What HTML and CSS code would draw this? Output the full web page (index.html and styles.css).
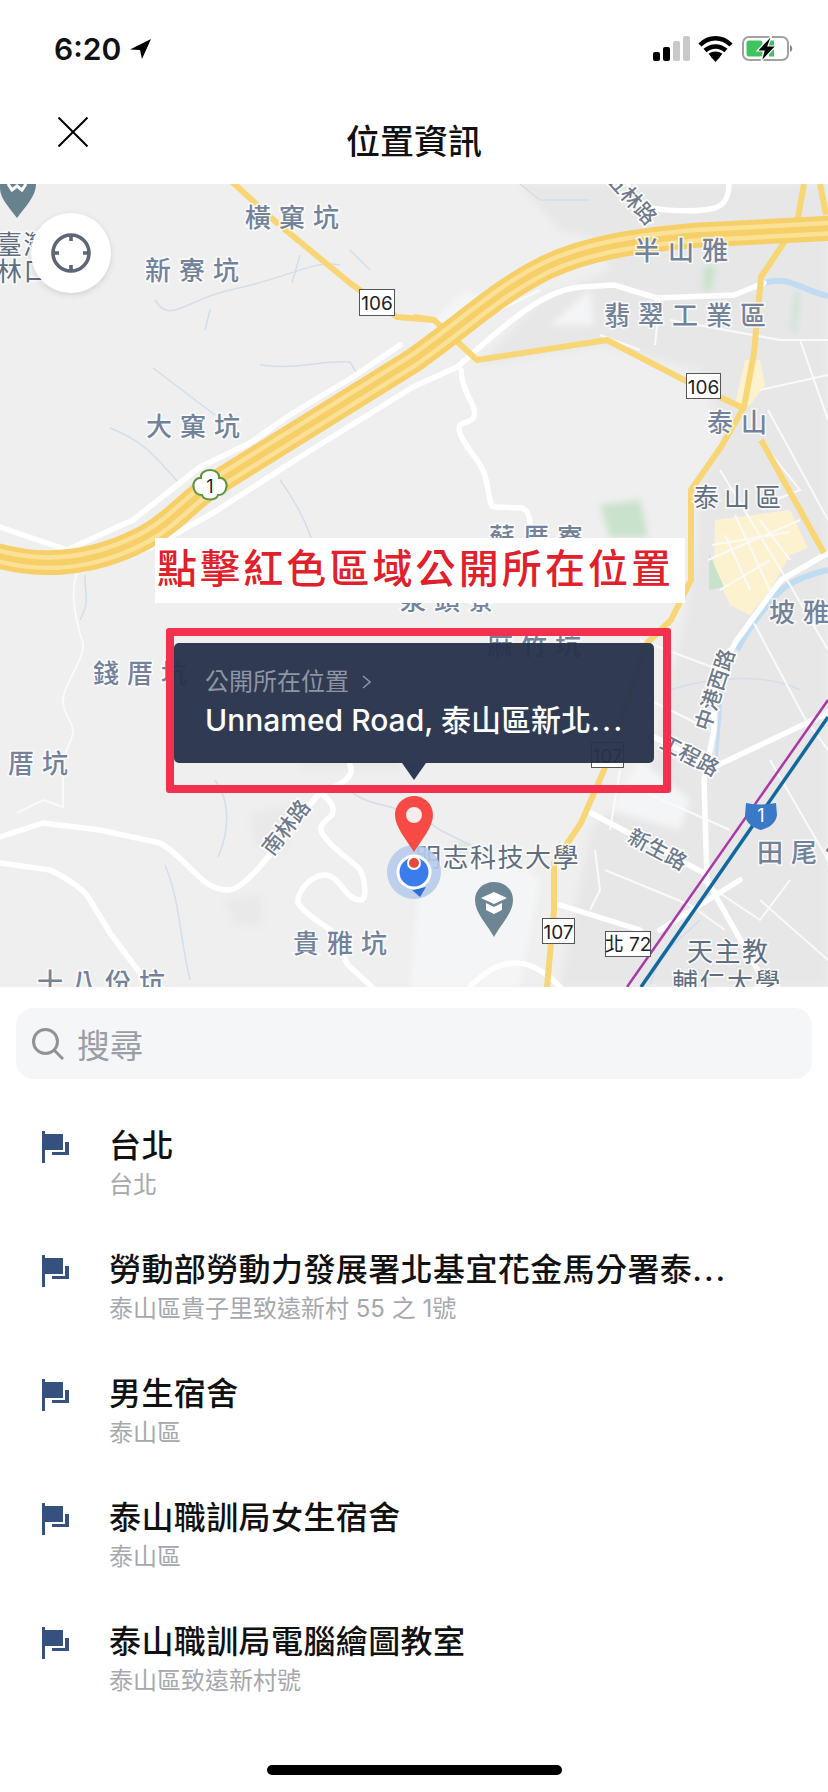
FILE: index.html
```html
<!DOCTYPE html>
<html lang="zh-Hant">
<head>
    <meta charset="UTF-8">
    <meta name="viewport" content="width=device-width, initial-scale=1.0">
    <title>位置資訊</title>
    <link rel="stylesheet" href="styles.css">
</head>
<body>
<div class="status-bar">
    <div class="status-left">
        <span class="clock">6:20</span>
        <svg class="loc-arrow" viewBox="0 0 22 20"><path d="M21 0 L0 10.5 L10 11 L12 20 Z"/></svg>
    </div>
    <svg class="status-right" viewBox="0 0 144 28">
        <rect x="0" y="17" width="7" height="9" rx="2" fill="#000"/>
        <rect x="10" y="12" width="7" height="14" rx="2" fill="#000"/>
        <rect x="20" y="6" width="7" height="20" rx="2" fill="#c9c9c9"/>
        <rect x="30" y="1" width="7" height="25" rx="2" fill="#c9c9c9"/>
        <path d="M47 10 C56 1 69 1 78 10 M52 15.5 C58 10 67 10 73 15.5 M57 20.5 C60 18 65 18 68 20.5" fill="none" stroke="#000" stroke-width="4.5"/>
        <path d="M62.5 27 L58 22 C61 20 64 20 67 22 Z" fill="#000"/>
        <rect x="90" y="2" width="45" height="23" rx="6" fill="none" stroke="#a2a2a2" stroke-width="2"/>
        <rect x="93.5" y="5.5" width="16" height="16" rx="2.5" fill="#3ec35e"/>
        <rect x="116" y="5.5" width="5" height="16" fill="#3ec35e"/>
        <path d="M137 10 C140 11 140 16 137 17 Z" fill="#8a8a8a"/>
        <path d="M119 0 L104 16 L111 16 L108 27 L123 11 L115 11 Z" fill="#000" stroke="#fff" stroke-width="1.2"/>
    </svg>
</div>

<div class="nav-bar">
    <svg class="close-icon" viewBox="0 0 30 30"><path d="M0.5 0.5 L29.5 29.5 M29.5 0.5 L0.5 29.5"/></svg>
    <h1 class="nav-title">位置資訊</h1>
</div>

<div class="map">
    <svg class="map-canvas" viewBox="0 184 828 803">
        <!-- built up areas -->
        <g class="soft">
            <path class="urban" d="M520 184 L828 184 L828 987 L560 987 L590 830 L650 770 L680 640 L695 560 L700 480 L725 440 L700 370 L600 345 L480 365 L540 300 L610 270 L600 240 L560 230 Z"/>
            <path class="urban-pale" d="M330 690 L400 690 L400 770 L300 770 Z"/>
            <path class="urban-pale" d="M225 900 L262 895 L262 925 L235 925 Z"/>
            <path class="urban-pale" d="M250 815 L290 805 L285 850 L255 845 Z"/>
            <path class="light" d="M424 330 L465 290 L488 300 L488 320 L445 328 Z"/>
            <path class="light" d="M550 325 L590 290 L594 325 Z"/>
            <path class="light" d="M420 880 L500 850 L540 880 L520 987 L410 987 Z"/>
            <path class="light" d="M640 760 L690 800 L680 830 L610 810 Z"/>
            <path class="green" d="M600 505 L640 500 L645 520 L648 537 L610 537 Z"/>
            <path class="green" d="M704 266 L716 266 L712 290 L702 290 Z"/>
            <path class="green" d="M795 292 L800 292 L796 332 L792 332 Z"/>
            <path class="green" d="M455 845 L470 845 L466 852 L458 852 Z"/>
        </g>
        <path class="city" d="M715 520 L790 510 L808 548 L790 555 L770 590 L750 615 L730 605 L714 570 Z"/>
        <path class="city" d="M745 360 L760 360 L765 385 L750 405 L735 405 Z"/>
        <path class="green" d="M709 553 L724 587 L709 590 Z"/>

        <!-- streams -->
        <g class="stream">
            <path d="M155 300 C170 325 185 300 230 290 C300 275 310 260 340 265 M210 310 L205 330 M300 255 L292 283 M350 250 L370 270"/>
            <path d="M260 365 C300 370 320 360 350 362 L358 375"/>
            <path d="M153 368 L215 415 M110 428 C140 440 150 450 178 482 M280 480 C295 500 305 520 312 540"/>
            <path d="M85 575 C85 600 90 600 80 620 M215 780 C230 800 230 830 218 857 M165 865 C180 900 180 940 190 980"/>
            <path d="M350 790 C370 810 400 800 440 830 L480 850"/>
            <path d="M670 690 C700 680 760 670 800 690"/>
            <path d="M520 184 L540 200 L590 200"/>
            <path d="M700 920 C680 940 660 950 650 985"/>
        </g>
        <path class="river" d="M764 283 C790 275 800 290 828 296"/>
        <path class="river" d="M737 650 C750 625 770 600 785 587 C800 577 815 573 828 570"/>
        <path class="river-thin" d="M720 690 C722 720 716 740 716 770"/>

        <!-- small roads -->
        <g class="road-thin">
            <path d="M77 573 C70 590 75 620 83 643 C85 660 62 685 63 703 C64 715 75 725 73 733 C70 745 62 755 63 775 L63 807 L43 800 L17 813"/>
            <path d="M600 335 L640 350 M660 298 L655 345"/>
            <path d="M670 320 L780 340 L828 340 M760 390 L828 375 M800 340 L828 420 M768 410 L828 520"/>
            <path d="M720 470 L790 585 L828 650 M760 440 L800 490 L775 500"/>
            <path d="M754 623 L804 717 L828 750 M770 760 L828 860"/>
            <path d="M640 640 L720 670 M650 700 L710 730 M640 790 L730 830 M605 870 L690 905 L725 930"/>
            <path d="M595 850 L600 890 L590 910 M620 770 L610 830 M700 880 L760 920 L790 880 M760 900 L828 960"/>
            <path d="M708 560 L800 520 M720 590 L770 560 M725 535 L750 590 M760 520 L790 560 M712 545 L790 532 M735 515 L770 590"/>
            <path d="M440 340 L540 290"/>
        </g>

        <!-- white roads -->
        <g class="road">
            <path d="M0 527 L67 550 L133 520 L200 467 L250 443 L293 413 L353 377 L400 345"/>
            <path d="M83 570 L150 548 L213 513 L300 457 L413 387 L457 367 C500 330 540 290 581 287 L614 285 L657 298 L734 295 L764 283"/>
            <path d="M461 370 C462 395 478 405 474 417 C470 425 458 420 459 430 C462 445 480 460 484 473 C490 490 488 507 495 507 L522 508 C530 510 531 525 531 537"/>
            <path d="M350 765 C356 778 338 785 322 793 C328 800 336 805 332 815 C325 822 318 825 322 833 C330 848 352 860 360 870 C365 880 368 900 360 900 C345 900 340 875 325 875 C312 875 297 890 298 903 C305 915 325 925 333 932 C340 945 342 955 348 965 L372 987"/>
            <path d="M0 837 L43 823 L100 830 L160 843 C190 860 200 890 228 890 C250 890 290 825 320 793"/>
            <path d="M0 863 L50 870 C70 880 85 890 90 900 L110 933 L140 973 L145 987"/>
            <path d="M640 205 C660 212 700 212 715 208 C725 205 729 195 729 184"/>
            <path d="M654 737 L714 767 L828 713"/>
            <path d="M591 813 L704 873 L714 893 L767 987"/>
            <path d="M707 880 L704 780 L714 730 L714 680 L737 640 L781 580 L828 553"/>
            <path d="M470 987 C500 955 530 955 560 987"/>
            <path d="M560 905 L640 930 M660 930 L740 880"/>
        </g>

        <!-- yellow roads -->
        <g class="road-yellow">
            <path d="M230 180 L277 223 L350 283 L397 317 L434 320"/>
            <path d="M414 317 L434 320 L477 360 L607 340 L684 380 L741 407"/>
            <path d="M804 184 L797 223 L761 277 L754 353 L744 407 L721 447 L691 490 L691 580 L671 620 L647 643 L604 770 L581 823 L554 863 L554 910 L547 987"/>
            <path d="M761 440 L824 553 M820 184 L826 215"/>
        </g>
        <g>
            <path class="hw hw-a" d="M-5 555 C40 568 90 565 140 540 C170 525 190 500 210 487 L414 360 C470 320 500 290 547 267 C590 247 640 240 700 235 L835 228"/>
            <path class="hw hw-b" d="M-5 555 C40 568 90 565 140 540 C170 525 190 500 210 487 L414 360 C470 320 500 290 547 267 C590 247 640 240 700 235 L835 228"/>
            <path class="hw hw-c" d="M-5 555 C40 568 90 565 140 540 C170 525 190 500 210 487 L414 360 C470 320 500 290 547 267 C590 247 640 240 700 235 L835 228"/>
        </g>

        <!-- rail -->
        <path class="rail-purple" d="M627 987 L828 700"/>
        <path class="rail-blue" d="M641 987 L828 717"/>

        <!-- area names -->
        <g class="place">
            <text x="245" y="227">橫窠坑</text>
            <text x="145" y="280">新寮坑</text>
            <text x="146" y="436">大窠坑</text>
            <text x="634" y="260">半山雅</text>
            <text x="604" y="325">翡翠工業區</text>
            <text x="707" y="432">泰山</text>
            <text x="489" y="547">蘇厝寮</text>
            <text x="400" y="610">泉頭寮</text>
            <text x="487" y="655">麻竹坑</text>
            <text x="93" y="683">錢厝坑</text>
            <text x="8" y="773">厝坑</text>
            <text x="293" y="953">貴雅坑</text>
            <text x="37" y="992">十八份坑</text>
            <text x="769" y="622">坡雅</text>
            <text x="757" y="862">田尾仔</text>
        </g>
        <g class="place place-dark">
            <text class="wide" x="693" y="507">泰山區</text>
            <text x="-4" y="254">臺灣</text>
            <text x="-4" y="281">林口</text>
            <text x="415" y="867">明志科技大學</text>
            <text x="687" y="961">天主教</text>
            <text x="672" y="992">輔仁大學</text>
        </g>

        <!-- road names -->
        <g class="street">
            <text transform="translate(626 203) rotate(48)" text-anchor="middle">五林路</text>
            <text transform="translate(292 832) rotate(-52)" text-anchor="middle">南林路</text>
            <text transform="translate(722 692) rotate(-72)" text-anchor="middle">中港西路</text>
            <text transform="translate(686 762) rotate(28)" text-anchor="middle">工程路</text>
            <text transform="translate(654 856) rotate(28)" text-anchor="middle">新生路</text>
        </g>

        <!-- road shields -->
        <g class="shield">
            <rect x="359.5" y="289.5" width="35" height="26"/>
            <text x="377" y="310">106</text>
            <rect x="686.5" y="373.5" width="34" height="25"/>
            <text x="703.5" y="394">106</text>
            <rect x="591.5" y="742.5" width="32" height="25"/>
            <text x="607.5" y="763">107</text>
            <rect x="542.5" y="918.5" width="32" height="25"/>
            <text x="558.5" y="939">107</text>
            <rect x="605.5" y="931.5" width="45" height="25"/>
            <text x="628" y="951">北 72</text>
        </g>
        <path d="M210 470 C216 470 220 474 219 478 C225 477 228 484 226 489 C225 493 222 495 218 495 C216 501 204 501 202 495 C198 495 195 493 194 489 C192 484 195 477 201 478 C200 474 204 470 210 470 Z" fill="#fff" stroke="#5f9440" stroke-width="2"/>
        <text class="shield-num" x="210" y="493">1</text>
        <path d="M746 803 C756 805 766 805 776 803 L777 815 C776 824 768 828 761 830 C754 828 746 824 745 815 Z" fill="#3a78c8"/>
        <text class="shield-num shield-num-w" x="761" y="822">1</text>

        <!-- poi pins -->
        <path d="M0 184 L36 184 C36 196 26 206 17 218 C8 206 0 198 0 188 Z" fill="#68818f"/>
        <path d="M8 184 L12 190 L17 186 L22 190 L26 184" fill="none" stroke="#fff" stroke-width="3"/>
        <path d="M494 882 C505 882 513 890 513 900 C513 913 501 924 494 937 C487 924 475 913 475 900 C475 890 483 882 494 882 Z" fill="#6e8593"/>
        <path d="M481 898 L494 892 L507 898 L494 904 Z M486 903 L494 907 L502 903 L502 910 L494 914 L486 910 Z" fill="#fff"/>

        <!-- current location -->
        <circle cx="414" cy="872" r="27" fill="#b7cbeb" fill-opacity=".9"/>
        <path d="M412 890 L426 887 L420 897 Z" fill="#2f6fd8"/>
        <circle cx="414" cy="872" r="16" fill="#3b7cec" stroke="#fff" stroke-width="3"/>
        <circle cx="414" cy="863" r="6" fill="#e6483f" stroke="#fff" stroke-width="2"/>
        <path d="M414 796 C425 796 433 805 433 815 C433 827 422 839 414 852 C406 839 395 827 395 815 C395 805 403 796 414 796 Z" fill="#f74a45"/>
        <circle cx="414" cy="815" r="8" fill="#f6ecec"/>
    </svg>

    <div class="locate-btn">
        <svg viewBox="0 0 40 40"><circle cx="20" cy="20" r="18" /><path d="M20 2 V8 M20 32 V38 M2 20 H8 M32 20 H38"/></svg>
    </div>

    <div class="hint">點擊紅色區域公開所在位置</div>

    <div class="tooltip">
        <div class="tooltip-label">公開所在位置<svg viewBox="0 0 9 14"><path d="M1 1 L8 7 L1 13"/></svg></div>
        <div class="tooltip-address">Unnamed Road, 泰山區新北<span class="dots">...</span></div>
    </div>
    <div class="red-frame"></div>
</div>

<div class="panel">
    <div class="search">
        <svg viewBox="0 0 32 32"><circle cx="13.5" cy="13.5" r="12"/><path d="M22 22 L31 31"/></svg>
        <span>搜尋</span>
    </div>
    <ul class="places">
        <li>
            <svg class="flag" viewBox="0 0 27 32"><path d="M0 0 H3 V32 H0 Z M3 3 H21 V19 H3 Z"/><path d="M10 21 H23 V11 H27 V24 H10 Z"/></svg>
            <div><div class="place-name">台北</div><div class="place-sub">台北</div></div>
        </li>
        <li>
            <svg class="flag" viewBox="0 0 27 32"><path d="M0 0 H3 V32 H0 Z M3 3 H21 V19 H3 Z"/><path d="M10 21 H23 V11 H27 V24 H10 Z"/></svg>
            <div><div class="place-name">勞動部勞動力發展署北基宜花金馬分署泰<span class="dots">...</span></div><div class="place-sub">泰山區貴子里致遠新村 55 之 1號</div></div>
        </li>
        <li>
            <svg class="flag" viewBox="0 0 27 32"><path d="M0 0 H3 V32 H0 Z M3 3 H21 V19 H3 Z"/><path d="M10 21 H23 V11 H27 V24 H10 Z"/></svg>
            <div><div class="place-name">男生宿舍</div><div class="place-sub">泰山區</div></div>
        </li>
        <li>
            <svg class="flag" viewBox="0 0 27 32"><path d="M0 0 H3 V32 H0 Z M3 3 H21 V19 H3 Z"/><path d="M10 21 H23 V11 H27 V24 H10 Z"/></svg>
            <div><div class="place-name">泰山職訓局女生宿舍</div><div class="place-sub">泰山區</div></div>
        </li>
        <li>
            <svg class="flag" viewBox="0 0 27 32"><path d="M0 0 H3 V32 H0 Z M3 3 H21 V19 H3 Z"/><path d="M10 21 H23 V11 H27 V24 H10 Z"/></svg>
            <div><div class="place-name">泰山職訓局電腦繪圖教室</div><div class="place-sub">泰山區致遠新村號</div></div>
        </li>
    </ul>
    <div class="home-bar"></div>
</div>
</body>
</html>
```
FILE: styles.css
```css
html, body {
    margin: 0;
    padding: 0;
}
body {
    width: 828px;
    height: 1792px;
    overflow: hidden;
    background-color: #fff;
    color: #111;
    font-family: Inter, "Noto Sans CJK TC", sans-serif;
}

/* status bar */
.status-bar {
    height: 92px;
    display: flex;
    justify-content: space-between;
    align-items: flex-start;
    padding: 35px 31px 0 54px;
    box-sizing: border-box;
}
.status-left {
    display: flex;
    align-items: center;
    gap: 9px;
}
.clock {
    font-size: 30px;
    font-weight: 600;
    line-height: 28px;
}
.loc-arrow {
    width: 22px;
    height: 20px;
}
.status-right {
    width: 144px;
    height: 28px;
}

/* nav */
.nav-bar {
    height: 92px;
    position: relative;
    display: flex;
    justify-content: center;
    padding-top: 28px;
    box-sizing: border-box;
}
.close-icon {
    position: absolute;
    left: 58px;
    top: 25px;
    width: 30px;
    height: 30px;
    fill: none;
    stroke: #000;
    stroke-width: 2;
}
.nav-title {
    margin: 0;
    font-size: 34px;
    font-weight: 500;
    line-height: 44px;
}

/* map */
.map {
    position: relative;
    height: 803px;
    overflow: hidden;
    background-color: #efefef;
}
.map-canvas {
    display: block;
    width: 828px;
    height: 803px;
}
.soft { filter: blur(3px); }
.urban { fill: #e7e7e8; }
.urban-pale { fill: #e9e9e9; }
.light { fill: #f4f5f6; }
.city { fill: #fdf2cf; }
.green { fill: #c9e2cc; }
.stream {
    fill: none;
    stroke: #d3deea;
    stroke-width: 1.5;
}
.river {
    fill: none;
    stroke: #bfdcf2;
    stroke-width: 6;
}
.river-thin {
    fill: none;
    stroke: #c5dcef;
    stroke-width: 3;
}
.road-thin {
    fill: none;
    stroke: #fafafa;
    stroke-width: 2;
}
.road {
    fill: none;
    stroke: #fff;
    stroke-width: 5.5;
    stroke-linejoin: round;
    stroke-linecap: round;
}
.road-yellow {
    fill: none;
    stroke: #f8d675;
    stroke-width: 6;
    stroke-linejoin: round;
}
.hw { fill: none; }
.hw-a { stroke: #f6cf68; stroke-width: 25; }
.hw-b { stroke: #fbe197; stroke-width: 15; }
.hw-c { stroke: #f6cf68; stroke-width: 6; }
.rail-purple {
    fill: none;
    stroke: #a83aa6;
    stroke-width: 2.5;
}
.rail-blue {
    fill: none;
    stroke: #12699f;
    stroke-width: 3.5;
}
.place text {
    font-size: 26px;
    font-weight: 500;
    letter-spacing: 8px;
    fill: #73829b;
    stroke: #fff;
    stroke-width: 3px;
    stroke-opacity: .8;
    paint-order: stroke;
}
.place-dark text {
    font-weight: 400;
    letter-spacing: 1.5px;
    fill: #5f6e80;
}
.place-dark .wide { letter-spacing: 5px; }
.street text {
    font-size: 21px;
    font-weight: 500;
    fill: #6f7a8c;
    stroke: #fff;
    stroke-width: 3px;
    paint-order: stroke;
}
.shield rect {
    fill: #fff;
    stroke: #555;
    stroke-width: 1;
}
.shield text {
    font-size: 19px;
    fill: #222;
    text-anchor: middle;
}
.shield-num {
    font-size: 18px;
    fill: #222;
    text-anchor: middle;
}
.shield-num-w { fill: #fff; }

.locate-btn {
    position: absolute;
    left: 31px;
    top: 29px;
    width: 80px;
    height: 80px;
    border-radius: 50%;
    background-color: #fff;
    box-shadow: 0 2px 6px rgba(0, 0, 0, .12);
    display: flex;
    align-items: center;
    justify-content: center;
}
.locate-btn svg {
    width: 40px;
    height: 40px;
    fill: none;
    stroke: #5d6675;
    stroke-width: 3.6;
}
.hint {
    position: absolute;
    left: 155px;
    top: 354px;
    width: 530px;
    height: 65px;
    background-color: #fff;
    color: #e0202a;
    font-size: 40px;
    font-weight: 500;
    letter-spacing: 3.1px;
    line-height: 62px;
    padding-left: 2px;
    box-sizing: border-box;
    white-space: nowrap;
}
.red-frame {
    position: absolute;
    left: 166px;
    top: 444px;
    width: 505px;
    height: 165px;
    border: 8px solid #f4304f;
    border-radius: 3px;
    box-sizing: border-box;
}
.tooltip {
    position: absolute;
    left: 174px;
    top: 459px;
    width: 480px;
    height: 120px;
    background-color: rgba(40, 50, 75, .96);
    border-radius: 5px;
    padding: 22px 31px 0;
    box-sizing: border-box;
}
.tooltip::after {
    content: "";
    position: absolute;
    left: 228px;
    top: 120px;
    border-top: 17px solid #2e3953;
    border-left: 12px solid transparent;
    border-right: 12px solid transparent;
}
.tooltip-label {
    font-size: 24px;
    line-height: 34px;
    color: #8e95a4;
    display: flex;
    align-items: center;
    gap: 13px;
}
.tooltip-label svg {
    width: 9px;
    height: 14px;
    fill: none;
    stroke: #8e95a4;
    stroke-width: 1.5;
}
.tooltip-address {
    margin-top: 2px;
    font-size: 30px;
    font-weight: 500;
    line-height: 38px;
    color: #fff;
    white-space: nowrap;
}
.dots { letter-spacing: 2px; }

/* search and results */
.panel {
    height: 805px;
    position: relative;
    padding-top: 21px;
    box-sizing: border-box;
}
.search {
    margin: 0 16px;
    height: 71px;
    border-radius: 18px;
    background-color: #f5f6f8;
    display: flex;
    align-items: center;
    gap: 13px;
    padding-left: 16px;
    box-sizing: border-box;
}
.search svg {
    width: 32px;
    height: 32px;
    fill: none;
    stroke: #8f9297;
    stroke-width: 3;
}
.search span {
    font-size: 33px;
    color: #9a9ea6;
}
.places {
    list-style: none;
    margin: 0;
    padding: 44px 0 0 42px;
}
.places li {
    display: flex;
    gap: 40px;
    height: 124px;
}
.flag {
    width: 27px;
    height: 32px;
    margin-top: 8px;
    flex: none;
    fill: #36517f;
}
.place-name {
    font-size: 32px;
    font-weight: 500;
    letter-spacing: .4px;
    line-height: 46px;
    color: #111;
    white-space: nowrap;
}
.place-sub {
    font-size: 24px;
    line-height: 34px;
    margin-top: -1px;
    color: #a5a8ad;
    white-space: nowrap;
}
.home-bar {
    position: absolute;
    left: 267px;
    top: 778px;
    width: 295px;
    height: 10px;
    border-radius: 5px;
    background-color: #000;
}
```
